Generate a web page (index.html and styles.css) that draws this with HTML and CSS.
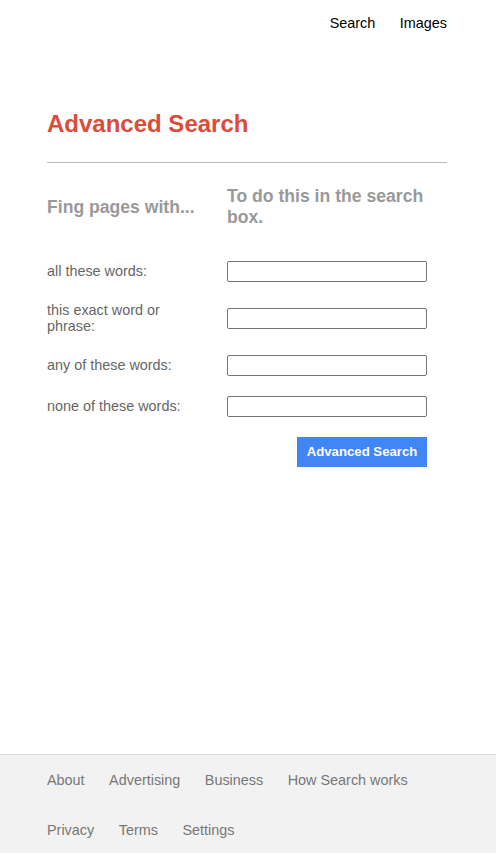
FILE: index.html
```html
<!DOCTYPE html>
<html lang="en">
<head>
<meta charset="utf-8">
<title>Advanced Search</title>
<link rel="stylesheet" href="styles.css">
</head>
<body>
<div class="page">
  <header class="topnav">
    <a href="#" class="topnav-link">Search</a>
    <a href="#" class="topnav-link">Images</a>
  </header>
  <main class="main">
    <h1 class="title">Advanced Search</h1>
    <hr class="divider">
    <form class="form">
      <div class="row heads">
        <h2 class="col-left head">Fing pages with...</h2>
        <h2 class="col-right head">To do this in the search box.</h2>
      </div>
      <div class="fields">
        <div class="row">
          <label class="col-left label" for="f1">all these words:</label>
          <div class="col-right"><input id="f1" class="field" type="text"></div>
        </div>
        <div class="row">
          <label class="col-left label" for="f2">this exact word or phrase:</label>
          <div class="col-right"><input id="f2" class="field" type="text"></div>
        </div>
        <div class="row">
          <label class="col-left label" for="f3">any of these words:</label>
          <div class="col-right"><input id="f3" class="field" type="text"></div>
        </div>
        <div class="row">
          <label class="col-left label" for="f4">none of these words:</label>
          <div class="col-right"><input id="f4" class="field" type="text"></div>
        </div>
        <div class="actions">
          <button type="button" class="btn">Advanced Search</button>
        </div>
      </div>
    </form>
  </main>
  <footer class="footer">
    <a href="#" class="footer-link">About</a>
    <a href="#" class="footer-link">Advertising</a>
    <a href="#" class="footer-link">Business</a>
    <a href="#" class="footer-link">How Search works</a>
    <a href="#" class="footer-link">Privacy</a>
    <a href="#" class="footer-link">Terms</a>
    <a href="#" class="footer-link">Settings</a>
  </footer>
</div>
</body>
</html>
```

FILE: styles.css
```css
* { box-sizing: border-box; }
html, body { margin: 0; padding: 0; }
body {
  font-family: "Liberation Sans", Arial, sans-serif;
  font-size: 14.4px;
  background: #fff;
}
.page {
  min-height: 100vh;
  display: flex;
  flex-direction: column;
}
.topnav {
  display: flex;
  justify-content: flex-end;
  gap: 24.5px;
  padding: 15px 49px 0 0;
  line-height: 16.5px;
}
.topnav-link {
  color: #000;
  text-decoration: none;
}
.main {
  flex: 1;
  padding: 0 49px 0 47px;
}
.title {
  margin: 78px 0 0;
  font-size: 24px;
  line-height: 27.6px;
  font-weight: bold;
  color: #dd4b39;
}
.divider {
  margin: 25px 0 0;
  border: 0;
  border-top: 1px solid #bbb;
  width: 400px;
}
.form { margin: 0; }
.row {
  display: flex;
  align-items: center;
}
.heads { margin-top: 23px; }
.head {
  margin: 0;
  font-size: 17.6px;
  line-height: 21px;
  font-weight: bold;
  color: #999;
}
.col-left {
  width: 180px;
  flex: none;
  padding-right: 20px;
}
.col-right {
  width: 200px;
  flex: none;
}
.fields {
  margin-top: 32.5px;
  display: flex;
  flex-direction: column;
  gap: 20px;
}
.label {
  color: #666;
  line-height: 16.5px;
}
.field {
  display: block;
  width: 200px;
  height: 21px;
  margin: 0;
  border: 1px solid #767676;
  border-radius: 2px;
  padding: 1px 2px;
  font: inherit;
  background: #fff;
}
.actions {
  width: 380px;
  display: flex;
  justify-content: flex-end;
}
.btn {
  width: 130px;
  height: 30px;
  border: 0;
  padding: 0;
  white-space: nowrap;
  background: #4285f4;
  color: #fff;
  font-family: "Liberation Sans", Arial, sans-serif;
  font-weight: bold;
  font-size: 13.2px;
}
.footer {
  background: #f2f2f2;
  border-top: 1px solid #ddd;
  display: flex;
  flex-wrap: wrap;
  column-gap: 24.5px;
  row-gap: 33.5px;
  padding: 17.5px 47px 14.5px 47px;
  line-height: 16.5px;
}
.footer-link {
  color: #777;
  text-decoration: none;
}
```
